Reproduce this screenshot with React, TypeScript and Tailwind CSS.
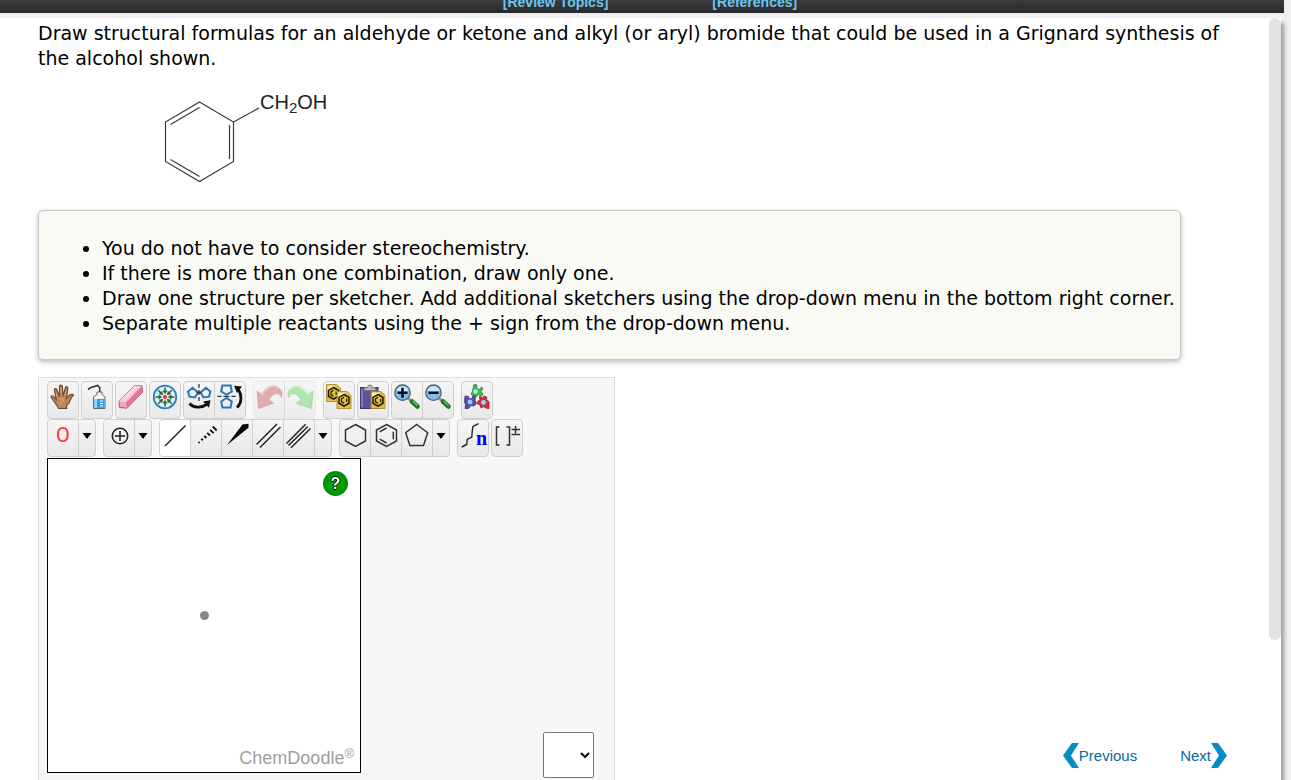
import { useState } from "react";
import type { ReactNode } from "react";

const NOTES = [
  "You do not have to consider stereochemistry.",
  "If there is more than one combination, draw only one.",
  "Draw one structure per sketcher. Add additional sketchers using the drop-down menu in the bottom right corner.",
  "Separate multiple reactants using the + sign from the drop-down menu.",
];

interface Tool {
  id: string;
  icon: ReactNode;
  disabled?: boolean;
}

interface ToolGroup {
  tools: Tool[];
  menu?: string;
}

const Icon = ({ children }: { children: ReactNode }) => (
  <svg
    viewBox="0 0 24 24"
    className="size-6 overflow-visible"
    fill="none"
    stroke="#222"
    strokeWidth="1.5"
    aria-hidden="true"
  >
    {children}
  </svg>
);

const HandIcon = () => (
  <Icon>
    <path
      d="M7.500 23.500C7 21 4.800 19 3.200 16.500L.3 12.500c-.6-1.400.9-2 1.900-1.100l3 3L3.400 5.200c-.3-1.700 1.800-2.100 2.400-.5l2.500 7L8.600 1.500c.1-1.900 2.500-1.900 2.700 0l.8 9.500 2.300-8.300c.6-1.700 2.600-1.100 2.400.6l-1.300 9.900 3-2.900c1-1.200 3.600-1.300 3.900-.3.200.9-1.600 1.500-2.200 3.100-1 3-2.400 5.500-4.600 7.500v2.900z"
      fill="#b98660"
      stroke="#72482b"
      strokeWidth="1.200"
    />
    <path d="M7 15c2-2 5-2 6 0m-4 5c0-2 2-4 4-4M5 8l1 3m4-8v5m5-2-1 4" stroke="#dcae87" strokeWidth="1" />
  </Icon>
);

const SprayIcon = () => (
  <Icon>
    <path d="M3 4.500 5.500 2.700 12.500.5l2.200 2.200V7" stroke="#333" strokeWidth="1.600" />
    <path d="M12 7h5v2.500l3 2.500v11.500H8.500V12l3.500-2.500z" fill="#f2f2f2" stroke="#666" strokeWidth="1" />
    <path d="M9 14h10.500v9H9z" fill="#2f9fe0" stroke="none" />
    <path d="M9 14h3v9H9z" fill="#8ed3f7" stroke="none" />
    <path d="M15 16h3m-3 2.500h3m-3 2.500h3" stroke="#fff" strokeWidth="1" />
  </Icon>
);

const EraserIcon = () => (
  <Icon>
    <path d="m15.500.5 7.500.2.700 6.300L8 23.200l-7.500-.7-.5-6z" fill="#f4a3c0" stroke="#a2527a" strokeWidth="1" />
    <path d="M15.500.5 0 16.500l7 1L23 .7z" fill="#ffc6da" stroke="none" />
    <path d="m7 17.500 1 5.700L23.700 7 23 .7z" fill="#d97a9f" stroke="none" />
    <path d="m4 15 13-13" stroke="#ffe4ee" strokeWidth="1.500" />
  </Icon>
);

const CleanIcon = () => (
  <Icon>
    <circle cx="12" cy="12" r="11.300" fill="#e4f2f8" stroke="#2682c3" strokeWidth="1.800" />
    {[0, 45, 90, 135, 180, 225, 270, 315].map((angle) => (
      <g key={angle} transform={`rotate(${angle} 12 12)`}>
        <path d="M12 2.500V8" stroke="#2c5f3c" strokeWidth="1.500" />
        <path d="m9.500 5.500 2.500 3.700 2.500-3.700z" fill="#2c6a3c" stroke="none" />
      </g>
    ))}
    <circle cx="12" cy="12" r="2.200" fill="#ef4545" stroke="none" />
  </Icon>
);

const FlipHorizontalIcon = () => (
  <Icon>
    <path
      d="M11 7.500 8 12.500l-5.500-.8L1 6.500l4.500-3.800zM13.500 7.500l3 5 5.500-.8 1.500-5.200L19 2.700z"
      stroke="#2676b8"
      strokeWidth="2"
    />
    <path d="M12-1v4m0 2v5m0 2v4M9.500 7.500h5" stroke="#333" strokeWidth="1.300" />
    <path d="M2.500 18.500c4 4.500 11.500 5 17 1" stroke="#111" strokeWidth="2.800" />
    <path d="m16 16.500 7.500-1.300-1.500 7.500z" fill="#111" stroke="none" />
  </Icon>
);

const FlipVerticalIcon = () => (
  <Icon>
    <path
      d="m8.500 9.500-5.300-3L4.300.5h8.400l1.100 6zM8.500 13l-5.300 3.500 1.300 6h8l1.300-6z"
      stroke="#2676b8"
      strokeWidth="2"
    />
    <path d="M-.5 11.300h4m2 0h6m2 0h4" stroke="#333" strokeWidth="1.300" />
    <path d="M19 22.500c5-4.500 5-12.500 1.500-18" stroke="#111" strokeWidth="2.800" />
    <path d="m16 .8 8 .7-5 6.500z" fill="#111" stroke="none" />
  </Icon>
);

const UndoIcon = () => (
  <Icon>
    <path
      d="M1.500 23.500 0 6l4.500 3.500C8.500 1 20-3 24.500 6.500c.6 2 .5 4 0 6C22.500 7 16.500 7 12 14.700l4.500 3.600z"
      fill="#d99393"
      stroke="#cf8484"
      strokeWidth=".8"
    />
    <path d="M5 10C9 2 17-1 22 4" stroke="#edc0c0" strokeWidth="1.200" />
  </Icon>
);

const RedoIcon = () => (
  <Icon>
    <path
      d="M23.500 23.500 25 6l-4.500 3.500C16.500 1 5-3 .5 6.500c-.6 2-.5 4 0 6C2.500 7 8.500 7 13 14.700l-4.500 3.600z"
      fill="#98e09a"
      stroke="#85cc88"
      strokeWidth=".8"
    />
    <path d="M20 10C16 2 8-1 3 4" stroke="#d5f4d5" strokeWidth="1.200" />
  </Icon>
);

// Small yellow page with a benzene ring, shared by copy and paste
const MoleculePage = ({ x, y }: { x: number; y: number }) => (
  <g transform={`translate(${x} ${y})`}>
    <path d="M0 0h10l4 4v13H0z" fill="#e0bd45" stroke="#a3832a" strokeWidth=".8" />
    <path d="M1 1h8l-8 8z" fill="#f8e9a0" stroke="none" />
    <path d="m7 3 5 2.900v5.800l-5 2.900-5-2.900V5.900z" stroke="#1d1600" strokeWidth="1.500" />
    <path d="M7 5.800 4.500 7.300v3L7 11.800M9.700 7.300v3.200" stroke="#1d1600" strokeWidth="1.200" />
  </g>
);

const CopyIcon = () => (
  <Icon>
    <MoleculePage x={-.5} y={-.5} />
    <MoleculePage x={10} y={6.5} />
  </Icon>
);

const PasteIcon = () => (
  <Icon>
    <rect x="-.5" y="2.500" width="17.500" height="21" fill="#5c529c" stroke="#40376f" strokeWidth="1" />
    <path d="M1 4v18" stroke="#8e85c4" />
    <path d="M3.500 5.500v-3h3L7.500 0h3l1 2.500h3v3z" fill="#b5b5bb" stroke="#777" strokeWidth=".8" />
    <MoleculePage x={10} y={6.5} />
  </Icon>
);

const MagnifierIcon = ({ plus }: { plus?: boolean }) => (
  <Icon>
    <path d="m13 13 3.500 3.500" stroke="#999" strokeWidth="3" />
    <path d="m17 16.500 5.500 5" stroke="#177527" strokeWidth="4.500" strokeLinecap="round" />
    <path d="m17.500 16 5 4.500" stroke="#58cf60" strokeWidth="1.500" />
    <circle cx="7.500" cy="7.700" r="7.700" fill="#83bde5" stroke="#4a6477" strokeWidth="1.300" />
    <path d="M1.500 5.700a6.300 6.300 0 0 1 12 0c-3 1.500-9 1.500-12 0z" fill="#cae6f8" stroke="none" />
    <path d="M2.500 7.700h10" stroke="#050d20" strokeWidth="2.600" />
    {plus && <path d="M7.500 2.700v10" stroke="#050d20" strokeWidth="2.600" />}
  </Icon>
);

const TemplatesIcon = () => (
  <Icon>
    <path
      d="m9-.5 3 .5-.5 3.500 3 1 2-2.500 1.500 2-2 2.500 2 2.500-1.500 2-3-1.500-2 2-3.500-1-2-1.500L7.500 6z"
      fill="#3cc246"
      stroke="#227c2b"
      strokeWidth=".8"
    />
    <path
      d="m0 11 3.500.5.5 2.500 3-.5 1-3 2.500 1-.5 4 1.500 3-2.500 2.500-3-.5-2.500 3H0l.5-4L-.5 17z"
      fill="#5c4cae"
      stroke="#3b307c"
      strokeWidth=".8"
    />
    <path
      d="m14.500 11.500 3 1 2-1.500 2.500 1.500-.5 2.500 2.500 1.500v7l-3.500-.5-1.500-1.500-3 1.500-1-3-3-1.500 1-2.500 2-.5z"
      fill="#d5313b"
      stroke="#951f2a"
      strokeWidth=".8"
    />
    <circle cx="10.500" cy="6.500" r="2.300" fill="#a5ecff" stroke="none" />
    <circle cx="5" cy="17" r="2.400" fill="#8adcff" stroke="none" />
    <circle cx="18.500" cy="17.500" r="2.400" fill="#8adcff" stroke="none" />
  </Icon>
);

const TOP_ROW: ToolGroup[][] = [
  [
    { tools: [{ id: "Move", icon: <HandIcon /> }] },
    { tools: [{ id: "Clear", icon: <SprayIcon /> }] },
    { tools: [{ id: "Erase", icon: <EraserIcon /> }] },
    { tools: [{ id: "Clean", icon: <CleanIcon /> }] },
    {
      tools: [
        { id: "Flip Horizontally", icon: <FlipHorizontalIcon /> },
        { id: "Flip Vertically", icon: <FlipVerticalIcon /> },
      ],
    },
  ],
  [
    {
      tools: [
        { id: "Undo", icon: <UndoIcon />, disabled: true },
        { id: "Redo", icon: <RedoIcon />, disabled: true },
      ],
    },
  ],
  [
    { tools: [{ id: "Copy", icon: <CopyIcon /> }] },
    { tools: [{ id: "Paste", icon: <PasteIcon /> }] },
    {
      tools: [
        { id: "Zoom In", icon: <MagnifierIcon plus /> },
        { id: "Zoom Out", icon: <MagnifierIcon /> },
      ],
    },
  ],
  [{ tools: [{ id: "Templates", icon: <TemplatesIcon /> }] }],
];

const BOTTOM_ROW: ToolGroup[][] = [
  [
    {
      menu: "More Elements",
      tools: [
        {
          id: "Oxygen",
          icon: (
            <span className="block w-6 text-center font-['Roboto',sans-serif] text-[20px] leading-6 text-[#ff3030]">O</span>
          ),
        },
      ],
    },
  ],
  [
    {
      menu: "More Charges",
      tools: [
        {
          id: "Increase Charge",
          icon: (
            <Icon>
              <circle cx="13" cy="13" r="7.700" />
              <path d="M13 8v10M8 13h10" />
            </Icon>
          ),
        },
      ],
    },
  ],
  [
    {
      menu: "More Bonds",
      tools: [
        { id: "Single Bond", icon: <Icon><path d="M2 23 22.500 2.500" /></Icon> },
        {
          id: "Recessed Bond",
          icon: (
            <Icon>
              <path
                d="m4.500 19 1 1m1.800-4.300 1.600 1.600m1.300-4.500 2.200 2.200m.8-5.200 2.800 2.800m.2-5.800 3.400 3.400M18.700 3.500l4 4"
                stroke="#111"
                strokeWidth="1.800"
              />
            </Icon>
          ),
        },
        { id: "Protruding Bond", icon: <Icon><path d="M2 22 17.500 1.500 23.500.7v4z" fill="#000" stroke="none" /></Icon> },
        { id: "Double Bond", icon: <Icon><path d="M.5 21.500 21 1M4 24.500 24.500 4" /></Icon> },
        {
          id: "Triple Bond",
          icon: <Icon><path d="M-.5 20.500 18.700 1.300M1.500 22.500 20.900 3.500M4 24.700 23.500 5.500" /></Icon>,
        },
      ],
    },
  ],
  [
    {
      menu: "More Rings",
      tools: [
        {
          id: "Cyclohexane Ring",
          icon: <Icon><path d="m12.500 1.500 10 5.500v11l-10 5.500-10-5.500V7z" stroke="#333" /></Icon>,
        },
        {
          id: "Benzene Ring",
          icon: (
            <Icon>
              <path
                d="m12.500 1.500 10 5.500v11l-10 5.500-10-5.500V7zM12.500 5 5.700 8.800M5.700 16.200l6.800 3.800M19.300 8.800v7.400"
                stroke="#333"
              />
            </Icon>
          ),
        },
        {
          id: "Cyclopentane Ring",
          icon: <Icon><path d="m11.700 1.500 11 8.200-4.200 12.800H4.900L.7 9.700z" stroke="#333" /></Icon>,
        },
      ],
    },
  ],
  [
    {
      tools: [
        {
          id: "Variable Chain",
          icon: (
            <Icon>
              <path d="m.7 24 5-2.500.5-5 4.600-2.500.4-5.500.8-5L17.500.7" strokeWidth="1.400" />
              <text x="15" y="22" fill="#0000ff" stroke="none" className="font-['Liberation_Serif',serif] text-[20px] font-bold">n</text>
            </Icon>
          ),
        },
      ],
    },
    {
      tools: [
        {
          id: "Repeating Unit",
          icon: (
            <Icon>
              <path d="M4.500 4h-3v18h3M11.500 4h3v18h-3M20.500 3v7.500M16.500 6.500h8.500M16.500 11.500h8.500" stroke="#333" />
            </Icon>
          ),
        },
      ],
    },
  ],
];

interface ToolbarProps {
  clusters: ToolGroup[][];
  active: string;
  onSelect: (id: string) => void;
}

const Toolbar = ({ clusters, active, onSelect }: ToolbarProps) => (
  <div className="flex gap-[7px]">
    {clusters.map((groups, i) => (
      <div key={i} className="flex gap-0.5">
        {groups.map((group) => (
          <div
            key={group.tools[0].id}
            className={`flex h-[38px] divide-x divide-[#d0d0d0] overflow-hidden rounded border bg-linear-to-b from-[#f5f5f5] to-[#e9e9e9] ${
              group.tools[0].disabled ? "border-[#e8e8e8] opacity-75" : "border-[#d0d0d0]"
            }`}
          >
            {group.tools.map((tool) => (
              <button
                key={tool.id}
                type="button"
                aria-label={tool.id}
                disabled={tool.disabled}
                onClick={() => onSelect(tool.id)}
                className={`box-content flex w-[30px] justify-center pt-[3px] ${active === tool.id ? "bg-white" : ""}`}
              >
                {tool.icon}
              </button>
            ))}
            {group.menu && (
              <button type="button" aria-label={group.menu} className="box-content flex w-4 justify-center pt-[13px]">
                <svg viewBox="0 0 10 6" className="h-1.5 w-2.5" aria-hidden="true">
                  <path d="M.5 0h9L5 6z" />
                </svg>
              </button>
            )}
          </div>
        ))}
      </div>
    ))}
  </div>
);

const Molecule = () => (
  <svg
    viewBox="0 0 180 100"
    className="ml-[122px] mt-[19px] block h-[100px] w-[180px]"
    fill="none"
    stroke="#3a3a3a"
    strokeWidth="1.200"
  >
    <path d="m39.500 12 34 20v39.500l-34 20-34-20V32z" />
    <path d="M39.500 17.500 10.500 34.500M10.500 69.500l29 17M69.500 35v34M73.500 32 99 18" />
    <text x="100" y="19" fill="#222" stroke="none" className="font-['Liberation_Sans',sans-serif] text-[20px]">
      CH
      <tspan dy="4" className="text-[15px]">2</tspan>
      <tspan dy="-4">OH</tspan>
    </text>
  </svg>
);

const Sketcher = () => {
  const [active, setActive] = useState("Single Bond");

  return (
    <div className="flex w-[577px] flex-col border border-b-0 border-[#dedede] bg-[#f7f7f7] pl-2 pt-[3px]">
      <Toolbar clusters={TOP_ROW} active={active} onSelect={setActive} />
      <Toolbar clusters={BOTTOM_ROW} active={active} onSelect={setActive} />
      <div className="relative mt-px flex h-[315px] w-[314px] shrink-0 items-center justify-center border border-black bg-white">
        <span className="size-[9px] rounded-full bg-[#888]" />
        <button
          type="button"
          aria-label="Help"
          className="absolute right-3 top-3 flex size-[25px] items-center justify-center rounded-full bg-radial from-[#00b800] to-[#007b0c] font-['Liberation_Sans',sans-serif] text-[16px] font-bold text-white [text-shadow:-1px_0_#000,1px_0_#000,0_1px_#000,0_-1px_#000]"
        >
          ?
        </button>
        <span className="absolute bottom-0.5 right-1.5 font-['Liberation_Sans',sans-serif] text-[18px] leading-6 text-[#a0a0a0]">
          ChemDoodle<sup className="text-[13px]">®</sup>
        </span>
      </div>
    </div>
  );
};

export default function App() {
  return (
    <div className="flex h-screen flex-col overflow-hidden bg-[#efefef] font-['DejaVu_Sans',sans-serif] text-black">
      <header className="mr-[7px] flex h-[13px] shrink-0 items-end justify-center gap-[104px] overflow-hidden bg-linear-to-b from-[#3a3b3d] to-[#28292a] pb-[3px] pl-4 font-['Liberation_Sans',sans-serif] text-[14px] font-bold leading-4 text-[#6cc5f0]">
        <a href="#topics">[Review Topics]</a>
        <a href="#references">[References]</a>
      </header>

      <div className="mr-2.5 mt-[5px] flex min-h-0 flex-1 bg-white shadow-[4px_4px_4px_-1px_#999]">
        <main className="flex min-w-0 flex-1 flex-col pl-[38px] pt-[3px]">
          <p className="mr-10 text-[19px] leading-[25px]">
            Draw structural formulas for an aldehyde or ketone and alkyl (or aryl) bromide that could be used in a
            Grignard synthesis of the alcohol shown.
          </p>

          <Molecule />

          <ul className="mr-[88px] mt-5 list-disc rounded-[5px] border border-[#c8c8c8] bg-[#fafaf5] pb-[23px] pl-[63px] pt-[25px] text-[19px] leading-[25px] shadow-[0_2px_5px_#bbb]">
            {NOTES.map((note) => (
              <li key={note}>{note}</li>
            ))}
          </ul>

          <div className="mt-[17px] flex min-h-0 flex-1">
            <div className="relative flex">
              <Sketcher />
              <select
                aria-label="Add sketcher"
                className="absolute bottom-0.5 right-[21px] h-[46px] w-[51px] rounded-xs border border-[#767676] bg-white pr-1"
              />
            </div>
            <nav className="mb-3 ml-auto mr-[42px] flex gap-[43px] self-end font-['Liberation_Sans',sans-serif] text-[15px] leading-[25px] text-[#0868a0]">
              <a href="#previous" className="flex items-center">
                <svg viewBox="0 0 16 25" className="h-[25px] w-4" fill="#058bc6" aria-hidden="true">
                  <path d="M9 0h7L8 12.500 16 25H9L0 12.500z" />
                </svg>
                Previous
              </a>
              <a href="#next" className="flex items-center">
                Next
                <svg viewBox="0 0 16 25" className="h-[25px] w-4" fill="#058bc6" aria-hidden="true">
                  <path d="M7 0H0l8 12.500L0 25h7l9-12.500z" />
                </svg>
              </a>
            </nav>
          </div>
        </main>
        <div className="h-[622px] w-3 shrink-0 rounded-full bg-[#e3e3e3]" />
      </div>
    </div>
  );
}
